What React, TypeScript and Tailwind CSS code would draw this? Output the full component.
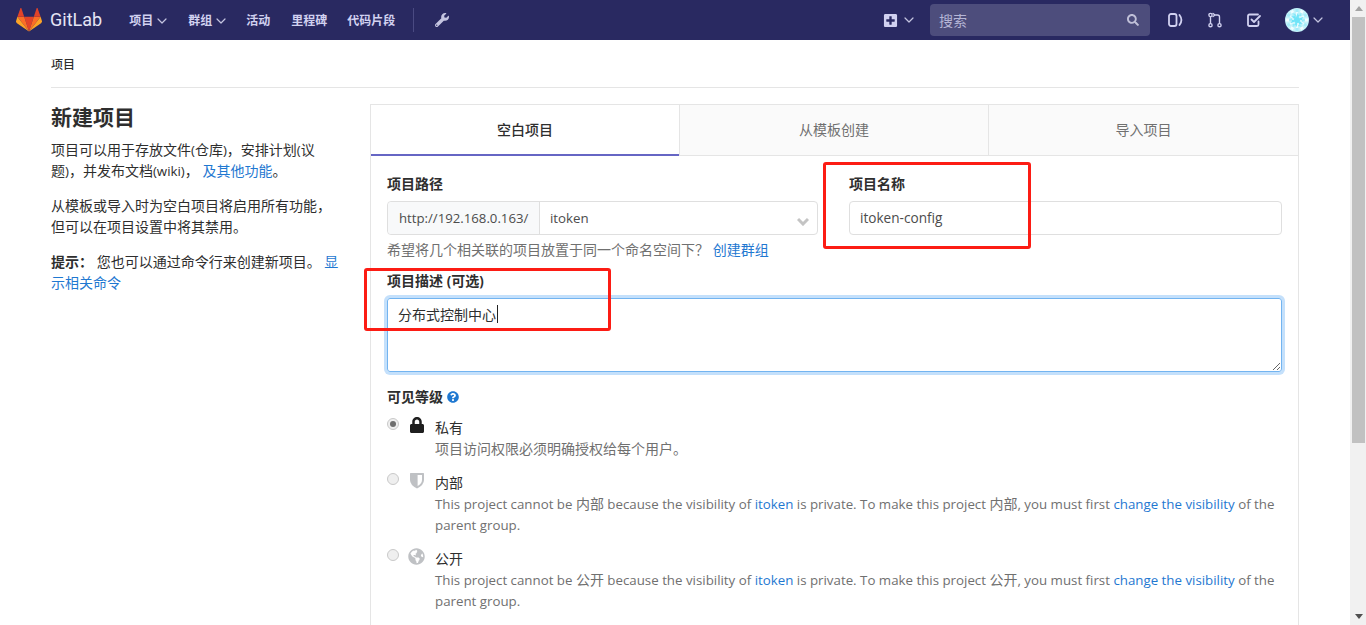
import React from "react";
import { ChevronDown } from "lucide-react";
import { FaLock, FaPlusSquare, FaQuestionCircle, FaSearch, FaWrench, FaGlobeAmericas } from "react-icons/fa";

function Tanuki() {
  return (
    <svg width="26" height="24" viewBox="0 0 26 24" className="shrink-0">
      <polygon points="13,23.5 17.8,8.8 8.2,8.8" fill="#e24329" />
      <polygon points="13,23.5 8.2,8.8 1.4,8.8" fill="#fc6d26" />
      <polygon points="1.4,8.8 0,13.3 0.6,14.9 13,23.5" fill="#fca326" />
      <polygon points="1.4,8.8 8.2,8.8 5.3,0 4.5,0" fill="#e24329" />
      <polygon points="13,23.5 17.8,8.8 24.6,8.8" fill="#fc6d26" />
      <polygon points="24.6,8.8 26,13.3 25.4,14.9 13,23.5" fill="#fca326" />
      <polygon points="24.6,8.8 17.8,8.8 20.7,0 21.5,0" fill="#e24329" />
    </svg>
  );
}

function NavItem({ label, chevron }: { label: string; chevron?: boolean }) {
  return (
    <span className="flex items-center gap-[1px] text-[12px] font-semibold text-[#d1d1f0]">
      {label}
      {chevron && <ChevronDown size={16} strokeWidth={1.8} className="text-[#c4c4e0]" />}
    </span>
  );
}

function Avatar() {
  const angles = [0, 30, 60, 90, 120, 150, 180, 210, 240, 270, 300, 330];
  return (
    <svg width="24" height="24" viewBox="0 0 24 24">
      <circle cx="12" cy="12" r="12" fill="#c4f2fa" />
      {angles.map((a, i) => (
        <g key={a} transform={`rotate(${a} 12 12)`}>
          <rect x="10.5" y="1" width="3" height="3" fill={i % 2 ? "#f0fdff" : "#a5ecf9"} />
          <rect x="11" y="4" width="2" height="3" fill={i % 2 ? "#a4eefa" : "#eafcff"} />
          <rect x="10" y="7" width="2" height="2" fill={i % 2 ? "#6fe4f8" : "#d8f8fd"} />
          <rect x="12" y="5.5" width="1.5" height="4" fill="#86e9f9" />
        </g>
      ))}
      <circle cx="12" cy="12" r="3" fill="#6fe4f8" />
    </svg>
  );
}

function Header() {
  return (
    <header className="flex h-10 shrink-0 items-center bg-[#292961] pl-[16px] pr-[24px]">
      <Tanuki />
      <span className="ml-[8px] text-[18px] leading-none text-[#e4e4f4]" style={{ fontFamily: "Roboto, sans-serif" }}>
        GitLab
      </span>
      <nav className="ml-[27px] flex items-center pt-[1px]">
        <NavItem label="项目" chevron />
        <span className="ml-[18px]">
          <NavItem label="群组" chevron />
        </span>
        <span className="ml-[17px]">
          <NavItem label="活动" />
        </span>
        <span className="ml-[21px]">
          <NavItem label="里程碑" />
        </span>
        <span className="ml-[20px]">
          <NavItem label="代码片段" />
        </span>
      </nav>
      <div className="ml-[18px] h-6 w-px bg-[#4a4a82]" />
      <FaWrench size={14} className="ml-[21px] text-[#c4c4e0]" />
      <div className="ml-auto flex items-center">
        <FaPlusSquare size={15} className="text-[#d1d1f0]" />
        <ChevronDown size={16} strokeWidth={1.8} className="ml-[3px] text-[#c4c4e0]" />
        <div className="ml-[13px] flex h-8 w-[220px] items-center justify-between rounded-[4px] bg-[#4d4d7c] pl-[9px] pr-[11px]">
          <span className="text-[14px] text-[#b5b5d6]">搜索</span>
          <FaSearch size={12} className="text-[#c0c0d8]" />
        </div>
        <svg width="16" height="16" viewBox="0 0 16 16" fill="none" stroke="#d1d1f0" strokeWidth="1.8" className="ml-[17px]">
          <rect x="2" y="2" width="7.5" height="12" rx="2" />
          <path d="M12.5 3 C14.8 6 14.8 10 12.5 13" strokeLinecap="round" />
        </svg>
        <svg width="16" height="16" viewBox="0 0 16 16" fill="none" stroke="#d1d1f0" strokeWidth="1.4" className="ml-[24px]">
          <circle cx="3.5" cy="3" r="1.6" />
          <circle cx="3.5" cy="13.2" r="1.6" />
          <circle cx="12.5" cy="13.2" r="1.6" />
          <path d="M3.5 4.8V11.4M6 1.5L8 3L6 4.5M8 3H10.5Q12.5 3 12.5 5V11.4" strokeLinecap="round" />
        </svg>
        <svg width="16" height="16" viewBox="0 0 16 16" fill="none" stroke="#d1d1f0" strokeWidth="1.8" className="ml-[23px]">
          <path d="M12.5 9.5V12.5Q12.5 14 11 14H3.5Q2 14 2 12.5V4Q2 2.5 3.5 2.5H12" strokeLinecap="round" />
          <path d="M5.5 7.5L8 10L14 4" strokeLinecap="round" strokeLinejoin="round" />
        </svg>
        <div className="ml-[23px] h-6">
          <Avatar />
        </div>
        <ChevronDown size={16} strokeWidth={1.8} className="ml-[1px] text-[#c4c4e0]" />
      </div>
    </header>
  );
}

function Shield() {
  return (
    <svg width="16" height="17" viewBox="0 0 16 17">
      <path d="M1 1.5Q1 1 1.5 1H14.5Q15 1 15 1.5V8Q15 13 8 16.5Q1 13 1 8Z" fill="#bfc1c4" />
      <path d="M8.6 3H13V8Q13 11.5 8.6 14Z" fill="#fff" />
    </svg>
  );
}

function Visibility({
  icon,
  title,
  children,
  checked,
  iconClass,
}: {
  icon: React.ReactNode;
  title: string;
  children: React.ReactNode;
  checked?: boolean;
  iconClass: string;
}) {
  return (
    <div className="flex">
      <span className="mt-[1px] flex h-3 w-3 shrink-0 items-center justify-center rounded-full border border-[#c9c9c9] bg-[#efefef]">
        {checked && <span className="h-[6px] w-[6px] rounded-full bg-[#6f6f6f]" />}
      </span>
      <span className={`ml-[10px] flex h-[20px] w-[26px] shrink-0 items-start ${iconClass}`}>{icon}</span>
      <div className="min-w-0">
        <div className="text-[14px] leading-[21px] text-[#2e2e2e]">{title}</div>
        <div className="text-[14px] leading-[21px] text-[#707070]">{children}</div>
      </div>
    </div>
  );
}

function L({ children }: { children: React.ReactNode }) {
  return <span className="text-[13.3px] leading-none">{children}</span>;
}

function Restricted({ level }: { level: string }) {
  return (
    <>
      <L>This project cannot be </L>
      {level}
      <L> because the visibility of </L>
      <a className="text-[13.3px] leading-none text-[#1f78d1]">itoken</a>
      <L> is private. To make this project </L>
      {level}
      <L>, you must first </L>
      <a className="text-[13.3px] leading-none text-[#1f78d1]">change the visibility</a>
      <L> of the parent group.</L>
    </>
  );
}

export default function App() {
  return (
    <div
      className="flex h-screen w-full overflow-hidden bg-white text-[14px] text-[#2e2e2e]"
      style={{ fontFamily: '"Open Sans", "Noto Sans CJK SC", sans-serif' }}
    >
      <div className="flex min-w-0 flex-1 flex-col">
        <Header />
        <main className="mx-[51px] flex min-h-0 flex-1 flex-col overflow-hidden">
          <div className="flex h-[48px] shrink-0 items-center border-b border-[#e5e5e5] pt-[2px] text-[12px] font-medium text-[#2e2e2e]">
            项目
          </div>
          <div className="mt-4 flex min-h-0 flex-1 overflow-hidden">
            <aside className="w-[290px] shrink-0">
              <h1 className="text-[21px] font-bold leading-[26px] text-[#2e2e2e]">新建项目</h1>
              <p className="mt-[9px] leading-[21px]">
                项目可以用于存放文件<L>(</L>仓库<L>)</L>，安排计划<L>(</L>议题<L>)</L>，并发布文档<L>(wiki)</L>，{" "}
                <a className="text-[#1f78d1]">及其他功能</a>。
              </p>
              <p className="mt-[14px] leading-[21px]">
                从模板或导入时为空白项目将启用所有功能，但可以在项目设置中将其禁用。
              </p>
              <p className="mt-[14px] leading-[21px]">
                <b>提示：</b> 您也可以通过命令行来创建新项目。 <a className="text-[#1f78d1]">显示相关命令</a>
              </p>
            </aside>
            <section className="ml-[29px] min-w-0 flex-1 border-x border-t border-[#e5e5e5]">
              <div className="grid h-[51px] grid-cols-[308px_309px_1fr]">
                <div className="flex items-center justify-center border-b-2 border-[#6666c4] pb-[1px] font-medium text-[#2e2e2e]">
                  空白项目
                </div>
                <div className="flex items-center justify-center border-b border-l border-[#e5e5e5] bg-[#fafafa] pb-[2px] text-[#707070]">
                  从模板创建
                </div>
                <div className="flex items-center justify-center border-b border-l border-[#e5e5e5] bg-[#fafafa] pb-[2px] text-[#707070]">
                  导入项目
                </div>
              </div>
              <div className="relative px-4 pt-[17px]">
                <div className="grid grid-cols-[431px_433px] justify-between">
                  <div>
                    <label className="block font-bold leading-[21px]">项目路径</label>
                    <div className="mt-[7px] flex h-[34px] rounded-[4px] border border-[#dfdfdf]">
                      <span className="flex w-[152px] items-center whitespace-nowrap rounded-l-[4px] border-r border-[#dfdfdf] bg-[#f8f9fa] pl-[11px] pt-[1px] text-[13.2px] text-[#4c4c4c]">
                        http://192.168.0.163/
                      </span>
                      <span className="flex flex-1 items-center justify-between pl-[10px] pr-[8px] pt-[1px] text-[13.3px] text-[#4c4c4c]">
                        itoken
                        <svg width="12" height="9" viewBox="0 0 12 9" fill="none" stroke="#c4c4c4" strokeWidth="3" className="mt-[5px]">
                          <path d="M1 2L6 7L11 2" />
                        </svg>
                      </span>
                    </div>
                  </div>
                  <div>
                    <label className="block font-bold leading-[21px]">项目名称</label>
                    <div className="mt-[7px] flex h-[34px] items-center rounded-[4px] border border-[#dfdfdf] px-[10px] pt-[1px] text-[13.6px] text-[#4c4c4c]">
                      itoken-config
                    </div>
                  </div>
                </div>
                <p className="mt-[5px] leading-[20px] text-[#707070]">
                  希望将几个相关联的项目放置于同一个命名空间下？ <a className="text-[#1f78d1]">创建群组</a>
                </p>
                <label className="mt-[10px] block font-bold leading-[21px]">
                  项目描述 <L>(</L>可选<L>)</L>
                </label>
                <div className="relative mt-[7px] flex">
                  <textarea
                    readOnly
                    defaultValue="分布式控制中心"
                    className="h-[74px] w-full resize-y rounded-[3px] border border-[#73b4f0] px-[10px] pb-[6px] pt-[5px] text-[14px] leading-[21px] text-[#2e2e2e] shadow-[0_0_0_3px_#c4e0fb] outline-none"
                  />
                  <span className="absolute left-[110px] top-[7px] h-[18px] w-px bg-[#222222]" />
                </div>
                <div className="mt-[14px] flex items-center gap-[4px]">
                  <span className="font-bold leading-[21px]">可见等级</span>
                  <FaQuestionCircle size={12} className="text-[#1f78d1]" />
                </div>
                <div className="mt-[10px] flex flex-col gap-[13px]">
                  <Visibility checked title="私有" icon={<FaLock size={16} />} iconClass="text-[#1f1f1f]">
                    项目访问权限必须明确授权给每个用户。
                  </Visibility>
                  <Visibility title="内部" icon={<Shield />} iconClass="">
                    <Restricted level="内部" />
                  </Visibility>
                  <Visibility title="公开" icon={<FaGlobeAmericas size={17} className="-ml-[1px]" />} iconClass="text-[#bfc1c4]">
                    <Restricted level="公开" />
                  </Visibility>
                </div>
              </div>
            </section>
          </div>
        </main>
      </div>
      <div className="flex w-4 shrink-0 flex-col items-center bg-[#f1f1f1] pl-[1px]">
        <div className="mt-[6px] h-0 w-0 border-x-4 border-b-[5px] border-x-transparent border-b-[#a3a3a3]" />
        <div className="mt-[6px] h-[426px] w-[13px] bg-[#c1c1c1]" />
        <div className="mb-[6px] mt-auto h-0 w-0 border-x-4 border-t-[5px] border-x-transparent border-t-[#505050]" />
      </div>
      <div className="pointer-events-none absolute left-[823px] top-[162px] h-[87px] w-[208px] rounded-[3px] border-[3px] border-[#fc1c14]" />
      <div className="pointer-events-none absolute left-[364px] top-[268px] h-[63px] w-[247px] rounded-[3px] border-[3px] border-[#fc1c14]" />
    </div>
  );
}
